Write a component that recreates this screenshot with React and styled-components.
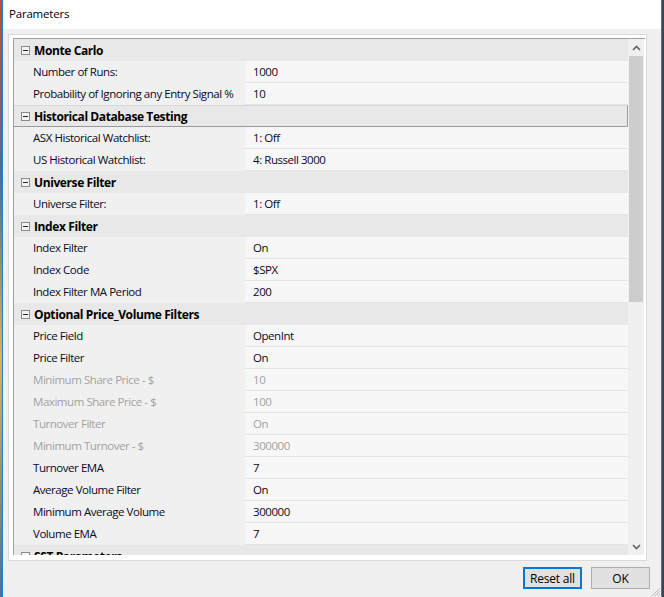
import React from "react";
import styled, { createGlobalStyle } from "styled-components";

const GlobalStyle = createGlobalStyle`
  html, body {
    margin: 0;
    padding: 0;
    background: #3b4654;
  }
  body {
    font-family: "Open Sans", "Liberation Sans", sans-serif;
  }
`;

const sections = [
  {
    title: "Monte Carlo",
    items: [
      ["Number of Runs:", "1000"],
      ["Probability of Ignoring any Entry Signal %", "10"]
    ]
  },
  {
    title: "Historical Database Testing",
    focused: true,
    items: [
      ["ASX Historical Watchlist:", "1: Off"],
      ["US Historical Watchlist:", "4: Russell 3000"]
    ]
  },
  {
    title: "Universe Filter",
    items: [["Universe Filter:", "1: Off"]]
  },
  {
    title: "Index Filter",
    items: [
      ["Index Filter", "On"],
      ["Index Code", "$SPX"],
      ["Index Filter MA Period", "200"]
    ]
  },
  {
    title: "Optional Price_Volume Filters",
    items: [
      ["Price Field", "OpenInt"],
      ["Price Filter", "On"],
      ["Minimum Share Price - $", "10", true],
      ["Maximum Share Price - $", "100", true],
      ["Turnover Filter", "On", true],
      ["Minimum Turnover - $", "300000", true],
      ["Turnover EMA", "7"],
      ["Average Volume Filter", "On"],
      ["Minimum Average Volume", "300000"],
      ["Volume EMA", "7"]
    ]
  },
  {
    title: "SST Parameters",
    items: []
  }
];

function App() {
  return (
    <>
      <GlobalStyle />
      <Screen>
        <BackEdge />
        <Window>
          <TitleBar>Parameters</TitleBar>
          <Body>
            <Frame>
              <Grid>
                <Viewport>
                  {sections.map(section => (
                    <React.Fragment key={section.title}>
                      <CategoryRow focused={section.focused}>
                        <Collapse />
                        <CategoryName>{section.title}</CategoryName>
                      </CategoryRow>
                      {section.items.map(([name, value, disabled]) => (
                        <PropRow key={name}>
                          <NameCell disabled={disabled}>{name}</NameCell>
                          <ValueCell disabled={disabled}>{value}</ValueCell>
                        </PropRow>
                      ))}
                    </React.Fragment>
                  ))}
                </Viewport>
                <ScrollBar>
                  <Arrow>
                    <svg width="9" height="6" viewBox="0 0 9 6">
                      <polyline points="1,5 4.5,1.5 8,5" fill="none" stroke="#606060" strokeWidth="1.6" />
                    </svg>
                  </Arrow>
                  <Track>
                    <Thumb />
                  </Track>
                  <Arrow>
                    <svg width="9" height="6" viewBox="0 0 9 6">
                      <polyline points="1,1 4.5,4.5 8,1" fill="none" stroke="#606060" strokeWidth="1.6" />
                    </svg>
                  </Arrow>
                </ScrollBar>
              </Grid>
            </Frame>
            <Footer>
              <Button primary>Reset all</Button>
              <Button>OK</Button>
            </Footer>
            <Grip>
              <svg width="11" height="11" viewBox="0 0 11 11">
                <path d="M10 2 L2 10 M10 5 L5 10 M10 8 L8 10" stroke="#b8b8b8" strokeWidth="1" />
              </svg>
            </Grip>
          </Body>
        </Window>
      </Screen>
    </>
  );
}

function Collapse() {
  return (
    <CollapseBox>
      <svg width="9" height="9" viewBox="0 0 9 9">
        <rect x="0.5" y="0.5" width="8" height="8" fill="#f4f4f4" stroke="#8a8a8a" />
        <line x1="2" y1="4.5" x2="7" y2="4.5" stroke="#222" />
      </svg>
    </CollapseBox>
  );
}

const Screen = styled.div`
  display: flex;
  width: 664px;
  height: 597px;
  overflow: hidden;
`;

const BackEdge = styled.div`
  width: 2px;
  background: linear-gradient(#c9463a, #4f6d96 30%, #d9b84a 60%, #4f6d96);
`;

const Window = styled.div`
  width: 658px;
  display: flex;
  flex-direction: column;
  border-left: 1px solid #1883d7;
  border-right: 1px solid #1883d7;
  background: #f0f0f0;
`;

const TitleBar = styled.div`
  height: 29px;
  flex: none;
  background: #fff;
  padding-left: 6px;
  font-size: 11.5px;
  letter-spacing: -0.2px;
  line-height: 27px;
  color: #000;
`;

const Body = styled.div`
  flex: 1;
  position: relative;
  padding: 5px 14px 0 5px;
`;

const Frame = styled.div`
  height: 527px;
  box-sizing: border-box;
  border: 1px solid #dadada;
  background: #fff;
  padding: 3px 1px 5px 4px;
`;

const Grid = styled.div`
  height: 517px;
  box-sizing: border-box;
  display: flex;
  border-top: 1px solid #a0a0a0;
  border-left: 1px solid #a0a0a0;
  padding-right: 1px;
`;

const Viewport = styled.div`
  flex: 1;
  overflow: hidden;
  background: #f0f0f0;
`;

const CategoryRow = styled.div`
  height: 22px;
  box-sizing: border-box;
  display: flex;
  align-items: center;
  background: #e8e8e8;
  padding-left: 7px;
  ${props =>
    props.focused &&
    `
    border-top: 1px solid #d8d8d8;
    border-right: 1px solid #9a9a9a;
    border-bottom: 1px solid #9a9a9a;
  `}
`;

const CollapseBox = styled.span`
  display: flex;
  width: 9px;
  height: 9px;
  margin-right: 4px;
`;

const CategoryName = styled.span`
  font-size: 12px;
  font-weight: 700;
  color: #000;
  letter-spacing: -0.4px;
`;

const PropRow = styled.div`
  height: 22px;
  display: flex;
`;

const NameCell = styled.div`
  width: 212px;
  flex: none;
  padding-left: 19px;
  font-size: 11.5px;
  line-height: 22px;
  white-space: nowrap;
  color: ${props => (props.disabled ? "#a2a2a2" : "#0a0a1e")};
  letter-spacing: -0.45px;
`;

const ValueCell = styled.div`
  flex: 1;
  box-sizing: border-box;
  padding-left: 8px;
  background: #f7f7f7;
  border-bottom: 1px solid #e4e4e4;
  font-size: 11.5px;
  line-height: 21px;
  color: ${props => (props.disabled ? "#a2a2a2" : "#0a0a1e")};
  letter-spacing: -0.45px;
`;

const ScrollBar = styled.div`
  width: 16px;
  display: flex;
  flex-direction: column;
  background: #f0f0f0;
`;

const Arrow = styled.div`
  height: 17px;
  display: flex;
  align-items: center;
  justify-content: center;
`;

const Track = styled.div`
  flex: 1;
  padding: 0 1px;
`;

const Thumb = styled.div`
  height: 246px;
  background: #cdcdcd;
`;

const Footer = styled.div`
  display: flex;
  justify-content: flex-end;
  gap: 9px;
  padding: 6px 0 0;
  margin-right: -3px;
`;

const Button = styled.button`
  width: 59px;
  height: 22px;
  box-sizing: border-box;
  padding: 0;
  background: #e1e1e1;
  border: ${props => (props.primary ? "2px solid #0078d7" : "1px solid #adadad")};
  font-family: "Open Sans", "Liberation Sans", sans-serif;
  font-size: 12px;
  letter-spacing: -0.2px;
  color: #000;
`;

const Grip = styled.div`
  position: absolute;
  right: 0;
  bottom: 0;
  width: 11px;
  height: 11px;
  display: flex;
`;

export default App;
